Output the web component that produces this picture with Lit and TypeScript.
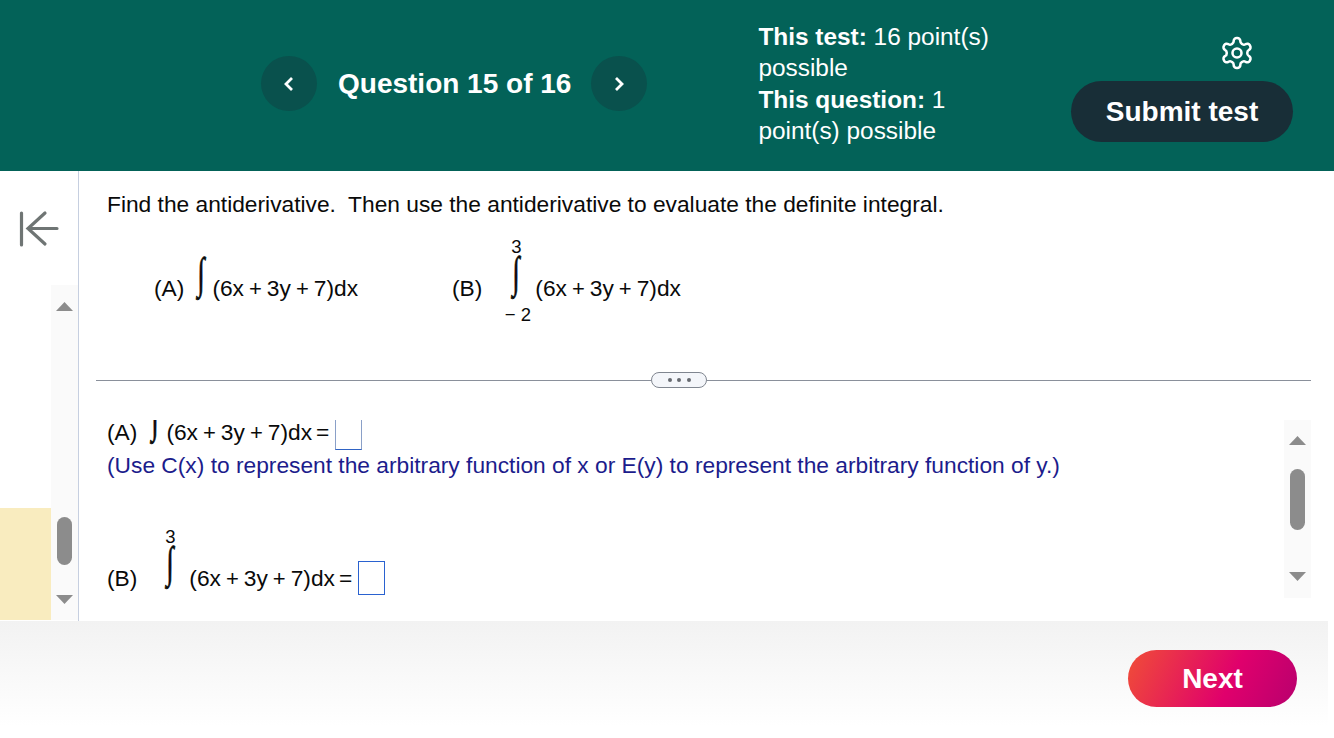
import { css, html, LitElement, svg } from "lit";
import { customElement } from "lit/decorators.js";

const expr = () => html`<span class="expr">(6x<span class="op">+</span>3y<span class="op">+</span>7)dx</span>`;

const definite = () => html`
  <span class="limits">
    <span class="lim top">3</span>
    <span class="int">∫</span>
    <span class="lim low">− 2</span>
  </span>
`;

const triangle = (points: string) => svg`<svg class="arrow" width="17" height="9" viewBox="0 0 17 9"><polygon points=${points} fill="#8c8c8c"></polygon></svg>`;

@customElement("app-root")
class AppRoot extends LitElement {
  static override styles = css`
    :host {
      display: flex;
      flex-direction: column;
      height: 738px;
      overflow: hidden;
      background: #fff;
      color: #0a0a0a;
      font-family: "Liberation Sans", Arial, sans-serif;
      font-size: 22.75px;
    }

    header {
      display: flex;
      align-items: center;
      height: 171px;
      flex: none;
      padding: 0 41px 0 261px;
      box-sizing: border-box;
      background: #036258;
      color: #fff;
    }
    .nav {
      display: flex;
      align-items: center;
      gap: 21px;
      margin-bottom: 4px;
    }
    .round {
      display: grid;
      place-items: center;
      width: 56px;
      height: 55px;
      border-radius: 50%;
      background: #09514d;
    }
    .title {
      margin-right: -1px;
      font-size: 28px;
      font-weight: 700;
    }
    .stats {
      width: 250px;
      margin: 0 0 4px 111px;
      font-size: 24.4px;
      line-height: 31.5px;
    }
    .actions {
      display: flex;
      flex-direction: column;
      align-items: flex-end;
      margin-left: auto;
      gap: 10px;
      margin-top: 6px;
    }
    .gear {
      margin-right: 38px;
      display: block;
    }
    .submit {
      display: grid;
      place-items: center;
      width: 222px;
      height: 61px;
      border-radius: 31px;
      background: #182e37;
      font-size: 28px;
      font-weight: 700;
      padding-top: 1px;
      box-sizing: border-box;
    }

    .body {
      display: flex;
      flex: none;
      height: 450px;
    }
    .side {
      display: flex;
      flex-direction: column;
      justify-content: space-between;
      width: 79px;
      flex: none;
      box-sizing: border-box;
      border-right: 1px solid #c6cfe0;
    }
    .collapse {
      display: block;
      margin: 39px 0 0 18px;
    }
    .side-bottom {
      display: flex;
      height: 335px;
      margin-bottom: 1px;
    }
    .marker {
      align-self: flex-end;
      width: 51px;
      height: 112px;
      background: #f9ecbf;
    }
    .scroll {
      display: flex;
      flex-direction: column;
      align-items: center;
      width: 27px;
      background: #fafafa;
    }
    .arrow {
      display: block;
      flex: none;
    }
    .thumb {
      width: 15px;
      border-radius: 8px;
      background: #8c8c8c;
    }
    .side .arrow:first-child {
      margin-top: 17px;
    }
    .side .thumb {
      height: 48px;
      margin-top: 206px;
    }
    .side .arrow:last-child {
      margin-top: 30px;
    }

    main {
      display: flex;
      flex-direction: column;
      flex: 1;
      min-width: 0;
    }
    .prompt {
      height: 201px;
      flex: none;
      padding-left: 28px;
      box-sizing: border-box;
    }
    .prompt p {
      margin: 0;
      padding-top: 19px;
      line-height: 28px;
      white-space: pre;
    }
    .problems {
      display: flex;
      align-items: center;
      height: 100px;
      padding-left: 47px;
      margin-top: 20px;
    }
    .problem {
      display: flex;
      align-items: center;
    }
    .problem-a {
      width: 298px;
    }
    .expr {
      white-space: nowrap;
    }
    .op {
      font-size: 22px;
      margin: 0 5px;
    }
    /* the integral sign is narrowed so its stem stands nearly upright */
    .int {
      display: block;
      height: 47px;
      font-family: "Liberation Serif", serif;
      font-size: 44px;
      font-weight: 700;
      line-height: 47px;
      text-align: center;
      -webkit-text-stroke: 0.8px #0a0a0a;
      transform: translateY(-5px) scaleX(0.6);
    }
    .raised {
      margin-bottom: 20px;
    }
    .problem-a .int {
      margin-left: 11px;
      margin-right: 5px;
    }
    .line-a .int {
      margin-left: 12px;
      margin-right: 5px;
    }
    .limits {
      display: flex;
      flex-direction: column;
      align-items: center;
      width: 25px;
      margin: -14px 5px 0 23px;
    }
    .line-b .limits {
      margin-left: 22px;
    }
    .limits .int {
      transform: translate(-2px, -5px) scaleX(0.6);
    }
    .lim {
      font-size: 18.5px;
      line-height: 14px;
      height: 14px;
      white-space: nowrap;
    }
    .top {
      margin-right: 3px;
    }
    .low {
      margin-top: 7px;
    }

    .divider {
      display: flex;
      align-items: center;
      height: 16px;
      flex: none;
      margin: 0 23px 0 17px;
    }
    .divider i {
      flex: 1;
      height: 1px;
      background: #8a909b;
    }
    .divider i:first-child {
      flex: none;
      width: 555px;
    }
    .pill {
      display: flex;
      align-items: center;
      justify-content: center;
      gap: 5.500px;
      width: 56px;
      height: 16px;
      box-sizing: border-box;
      border: 1px solid #808690;
      border-radius: 8px;
      background: #f4f6fa;
    }
    .pill b {
      width: 4px;
      height: 4px;
      border-radius: 50%;
      background: #666a70;
    }

    .answers {
      display: flex;
      height: 178px;
      flex: none;
      margin-top: 32px;
      padding-right: 23px;
    }
    .answer-body {
      flex: 1;
      padding-left: 28px;
      overflow: hidden;
    }
    .line-a {
      display: flex;
      align-items: center;
      height: 24px;
    }
    .equals {
      margin-left: 4px;
    }
    .box {
      display: block;
      width: 27px;
      margin-left: 6px;
      box-sizing: border-box;
      border: 1px solid #2a62d0;
      flex: none;
    }
    .line-a .box {
      align-self: flex-start;
      height: 35px;
      margin-top: -5px;
      border-color: #8aa0c8;
      border-bottom-color: #2f63c4;
    }
    .hint {
      margin: 5px 0 0;
      height: 33px;
      line-height: 33px;
      color: #1c1c8c;
      white-space: pre;
    }
    .line-b {
      display: flex;
      align-items: center;
      margin-top: 62px;
    }
    .line-b .box {
      height: 34px;
    }
    .answers .arrow:first-child {
      margin-top: 16px;
    }
    .answers .thumb {
      height: 61px;
      margin-top: 24px;
    }
    .answers .arrow:last-child {
      margin-top: 42px;
    }

    footer {
      flex: 1;
      display: flex;
      justify-content: flex-end;
      padding: 29px 31px 0 0;
      margin-right: 6px;
      background: linear-gradient(#f2f2f2, #fff 90%);
    }
    .next {
      display: grid;
      place-items: center;
      width: 169px;
      height: 57px;
      border-radius: 29px;
      background: linear-gradient(115deg, #f04e37, #e0006c 60%, #b8006e);
      color: #fff;
      font-size: 28px;
      font-weight: 700;
    }
  `;

  override render() {
    return html`
      <header>
        <div class="nav">
          <div class="round">
            <svg width="14" height="16" viewBox="0 0 14 16"><path d="M10 2 4 8l6 6" fill="none" stroke="#fff" stroke-width="2.800"></path></svg>
          </div>
          <div class="title">Question 15 of 16</div>
          <div class="round">
            <svg width="14" height="16" viewBox="0 0 14 16"><path d="M4 2l6 6-6 6" fill="none" stroke="#fff" stroke-width="2.800"></path></svg>
          </div>
        </div>
        <div class="stats">
          <div><b>This test:</b> 16 point(s) possible</div>
          <div><b>This question:</b> 1 point(s) possible</div>
        </div>
        <div class="actions">
          <svg class="gear" width="36" height="36" viewBox="0 0 24 24" fill="none" stroke="#fff" stroke-width="1.700" stroke-linecap="round" stroke-linejoin="round">
            <path d="M12.220 2h-.44a2 2 0 0 0-2 2v.18a2 2 0 0 1-1 1.730l-.43.25a2 2 0 0 1-2 0l-.15-.08a2 2 0 0 0-2.730.73l-.22.38a2 2 0 0 0 .73 2.730l.15.1a2 2 0 0 1 1 1.720v.51a2 2 0 0 1-1 1.740l-.15.09a2 2 0 0 0-.73 2.730l.22.38a2 2 0 0 0 2.730.73l.15-.08a2 2 0 0 1 2 0l.43.25a2 2 0 0 1 1 1.730V20a2 2 0 0 0 2 2h.44a2 2 0 0 0 2-2v-.18a2 2 0 0 1 1-1.730l.43-.25a2 2 0 0 1 2 0l.15.08a2 2 0 0 0 2.730-.73l.22-.39a2 2 0 0 0-.73-2.730l-.15-.08a2 2 0 0 1-1-1.740v-.5a2 2 0 0 1 1-1.740l.15-.09a2 2 0 0 0 .73-2.730l-.22-.38a2 2 0 0 0-2.730-.73l-.15.08a2 2 0 0 1-2 0l-.43-.25a2 2 0 0 1-1-1.730V4a2 2 0 0 0-2-2z"></path>
            <circle cx="12" cy="12" r="3"></circle>
          </svg>
          <div class="submit">Submit test</div>
        </div>
      </header>

      <div class="body">
        <aside class="side">
          <svg class="collapse" width="42" height="38" viewBox="0 0 42 38" fill="none" stroke="#6f7574" stroke-width="3.200" stroke-linecap="round">
            <path d="M3.500 3v32M39 18.500H10M27 3 10 18.500 27 34"></path>
          </svg>
          <div class="side-bottom">
            <div class="marker"></div>
            <div class="scroll">
              ${triangle("8.500,0 17,9 0,9")}
              <div class="thumb"></div>
              ${triangle("0,0 17,0 8.500,9")}
            </div>
          </div>
        </aside>

        <main>
          <div class="prompt">
            <p>Find the antiderivative.  Then use the antiderivative to evaluate the definite integral.</p>
            <div class="problems">
              <div class="problem problem-a">
                <span>(A)</span>
                <span class="int raised">∫</span>
                ${expr()}
              </div>
              <div class="problem">
                <span>(B)</span>
                ${definite()}
                ${expr()}
              </div>
            </div>
          </div>

          <div class="divider">
            <i></i>
            <div class="pill"><b></b><b></b><b></b></div>
            <i></i>
          </div>

          <div class="answers">
            <div class="answer-body">
              <div class="line-a">
                <span>(A)</span>
                <span class="int raised">∫</span>
                ${expr()}
                <span class="equals">=</span>
                <span class="box"></span>
              </div>
              <p class="hint">(Use C(x) to represent the arbitrary function of x or E(y) to represent the arbitrary function of y.)</p>
              <div class="line-b">
                <span>(B)</span>
                ${definite()}
                ${expr()}
                <span class="equals">=</span>
                <span class="box"></span>
              </div>
            </div>
            <div class="scroll">
              ${triangle("8.500,0 17,9 0,9")}
              <div class="thumb"></div>
              ${triangle("0,0 17,0 8.500,9")}
            </div>
          </div>
        </main>
      </div>

      <footer><div class="next">Next</div></footer>
    `;
  }
}

declare global {
  interface HTMLElementTagNameMap {
    "app-root": AppRoot;
  }
}
